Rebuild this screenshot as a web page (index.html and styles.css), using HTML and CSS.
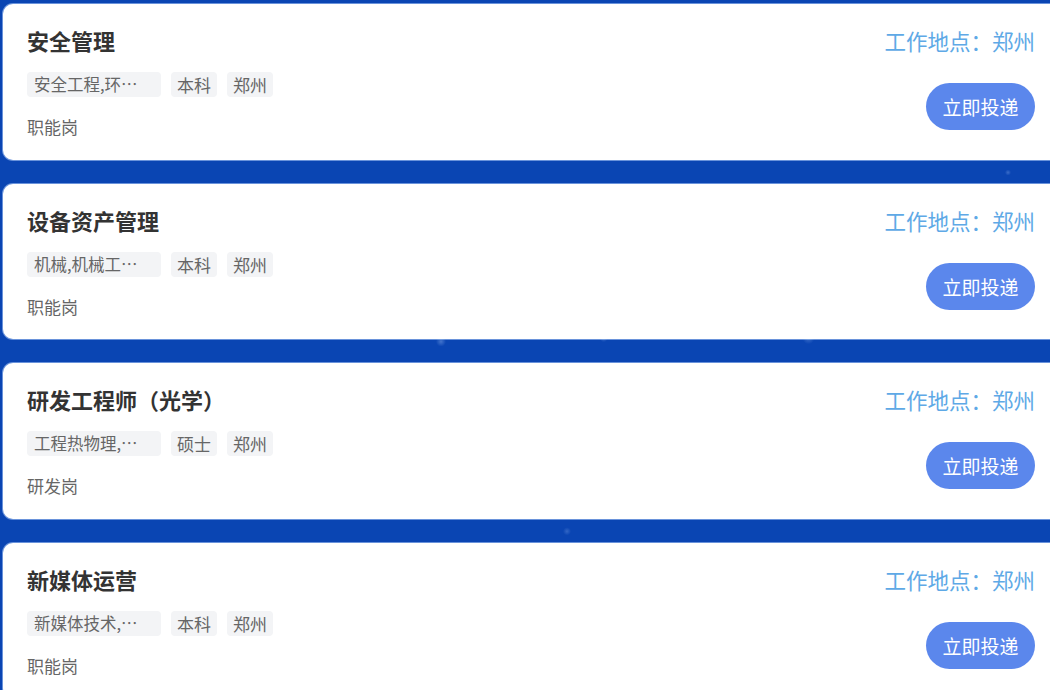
FILE: index.html
```html
<!DOCTYPE html>
<html lang="zh-CN">
<head>
<meta charset="utf-8">
<title>职位列表</title>
<link rel="stylesheet" href="styles.css">
</head>
<body>
<div class="list">
  <div class="card">
    <div class="info">
      <div class="title">安全管理</div>
      <div class="tags">
        <span class="tag tag-major">安全工程,环…</span>
        <span class="tag">本科</span>
        <span class="tag">郑州</span>
      </div>
      <div class="cat">职能岗</div>
    </div>
    <div class="side">
      <div class="loc">工作地点：郑州</div>
      <button class="apply">立即投递</button>
    </div>
  </div>
  <div class="card">
    <div class="info">
      <div class="title">设备资产管理</div>
      <div class="tags">
        <span class="tag tag-major">机械,机械工…</span>
        <span class="tag">本科</span>
        <span class="tag">郑州</span>
      </div>
      <div class="cat">职能岗</div>
    </div>
    <div class="side">
      <div class="loc">工作地点：郑州</div>
      <button class="apply">立即投递</button>
    </div>
  </div>
  <div class="card">
    <div class="info">
      <div class="title">研发工程师（光学）</div>
      <div class="tags">
        <span class="tag tag-major">工程热物理,…</span>
        <span class="tag">硕士</span>
        <span class="tag">郑州</span>
      </div>
      <div class="cat">研发岗</div>
    </div>
    <div class="side">
      <div class="loc">工作地点：郑州</div>
      <button class="apply">立即投递</button>
    </div>
  </div>
  <div class="card">
    <div class="info">
      <div class="title">新媒体运营</div>
      <div class="tags">
        <span class="tag tag-major">新媒体技术,…</span>
        <span class="tag">本科</span>
        <span class="tag">郑州</span>
      </div>
      <div class="cat">职能岗</div>
    </div>
    <div class="side">
      <div class="loc">工作地点：郑州</div>
      <button class="apply">立即投递</button>
    </div>
  </div>
</div>
</body>
</html>
```
FILE: styles.css
```css
html, body {
  margin: 0;
  padding: 0;
  height: 100%;
  overflow: hidden;
}
body {
  font-family: "Noto Sans CJK SC", "Noto Sans", sans-serif;
  background-color: #0a45b3;
  background-image:
    radial-gradient(circle at 42% 49.5%, rgba(170,200,250,0.35) 0, rgba(170,200,250,0) 5px),
    radial-gradient(circle at 57.5% 49%, rgba(170,200,250,0.3) 0, rgba(170,200,250,0) 4px),
    radial-gradient(circle at 77% 49%, rgba(170,200,250,0.3) 0, rgba(170,200,250,0) 6px),
    radial-gradient(circle at 96% 25%, rgba(170,200,250,0.3) 0, rgba(170,200,250,0) 3px),
    radial-gradient(circle at 54% 77%, rgba(170,200,250,0.25) 0, rgba(170,200,250,0) 4px);
}
.list {
  display: flex;
  flex-direction: column;
  gap: 24px;
  padding: 4px 0 0 3px;
}
.card {
  box-sizing: border-box;
  height: 155.5px;
  margin-right: -12px;
  background: #fff;
  border-radius: 10px;
  box-shadow: 0 0 0 1px rgba(170, 200, 245, 0.6);
  display: flex;
  justify-content: space-between;
  align-items: flex-start;
  padding: 22px 27px 0 24px;
  flex-shrink: 0;
}
.info {
  display: flex;
  flex-direction: column;
}
.title {
  font-size: 22px;
  line-height: 28px;
  font-weight: 700;
  color: #333;
}
.tags {
  display: flex;
  gap: 10px;
  margin-top: 18px;
}
.tag {
  height: 25px;
  line-height: 25px;
  padding: 0 6px;
  font-size: 17px;
  color: #666;
  background: #f3f4f6;
  border-radius: 4px;
  white-space: nowrap;
}
.tag-major {
  box-sizing: border-box;
  width: 134px;
  padding: 0 7px;
  font-size: 16.5px;
  overflow: hidden;
}
.cat {
  margin-top: 19px;
  font-size: 17px;
  line-height: 22px;
  color: #666;
}
.side {
  display: flex;
  flex-direction: column;
  align-items: flex-end;
  padding-top: 1px;
}
.loc {
  font-size: 21.5px;
  line-height: 28px;
  color: #5ea9e6;
}
.apply {
  margin-top: 28px;
  width: 109px;
  height: 47px;
  border: none;
  border-radius: 24px;
  background: #5b87ec;
  color: #fff;
  font-family: "Noto Sans CJK SC", "Noto Sans", sans-serif;
  font-size: 19px;
  padding: 0;
  cursor: pointer;
}
```
